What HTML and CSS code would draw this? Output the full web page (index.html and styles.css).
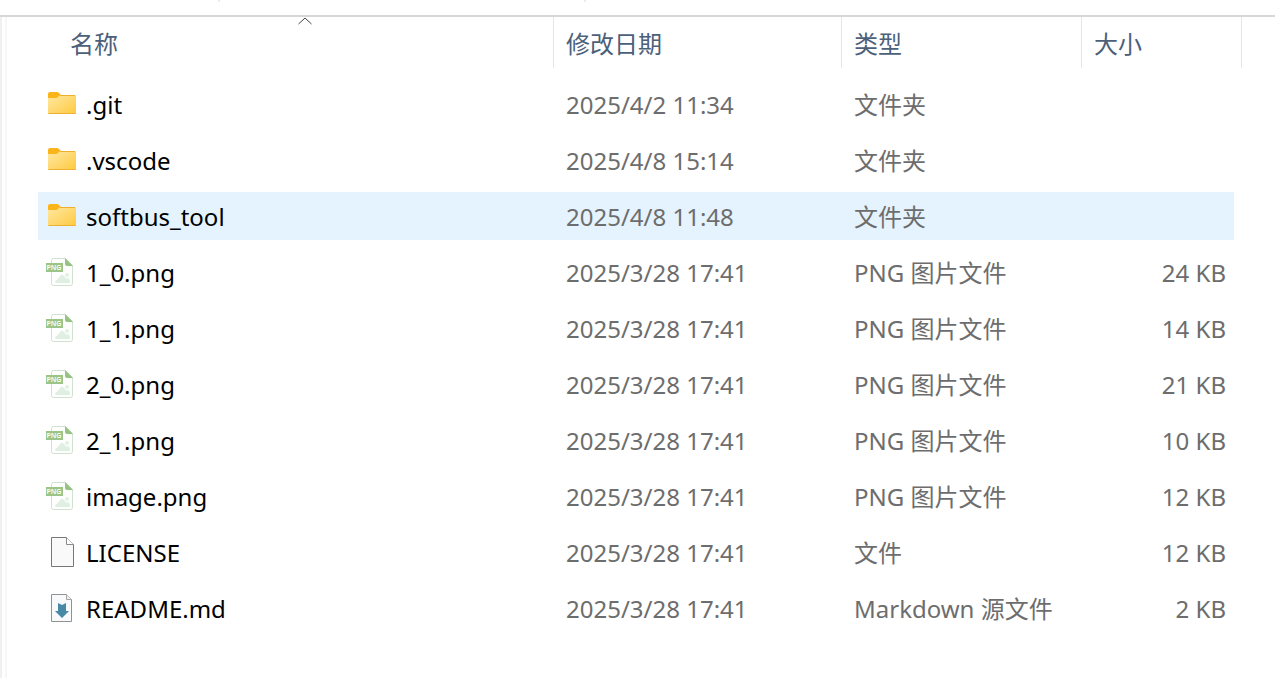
FILE: index.html
```html
<!DOCTYPE html>
<html lang="zh-CN">
<head>
    <meta charset="UTF-8">
    <meta name="viewport" content="width=device-width, initial-scale=1.0">
    <title>文件</title>
    <link rel="stylesheet" href="styles.css">
</head>
<body>
    <!-- Icon shapes shared by the rows -->
    <svg class="sprite" aria-hidden="true">
        <defs>
            <linearGradient id="folder-fill" x1="0" y1="0" x2="1" y2="1">
                <stop offset="0" stop-color="#ffe9a4"/>
                <stop offset="1" stop-color="#fec93f"/>
            </linearGradient>
            <symbol id="icon-folder" viewBox="0 0 32 32">
                <path d="M2 6q0-2 2-2h7q1 0 2 1l2 2-3 4H2z" fill="#fbb41b"/>
                <path d="M2 10h8q1 0 2-1l2-2h15q1 0 1 1v17q0 1-1 1H3q-1 0-1-1z" fill="url(#folder-fill)"/>
                <path d="M14 7.500h15M2.500 25.500h27" stroke="#efb02f" fill="none"/>
            </symbol>
            <symbol id="icon-png" viewBox="0 0 32 32">
                <path d="M7.500 2.500h12l7 7v18q0 2-2 2h-17q-2 0-2-2v-23q0-2 2-2z" fill="#fdfefd" stroke="#cfe2cb"/>
                <path d="M19 2l8 8h-6q-2 0-2-2z" fill="#97c484"/>
                <path d="M9 27q0-3 3-4l2-3q2-2 4 0l2 3 1-1q3 0 3 5z" fill="#dfefe2"/>
                <circle cx="21" cy="19" r="2" fill="#e3f1e5"/>
                <path d="M0 7h17v9H0z" fill="#9bc487"/>
                <text class="icon-label" x="8" y="14" text-anchor="middle">PNG</text>
            </symbol>
            <symbol id="icon-file" viewBox="0 0 32 32">
                <path d="M5.500 1.500h15l7 7v22h-22z" fill="#f9f9f9" stroke="#777"/>
                <path d="M20.500 1.500v7h7" fill="#fff" stroke="#8a8a8a"/>
            </symbol>
            <symbol id="icon-markdown" viewBox="0 0 32 32">
                <path d="M5.500 2.500h15l5 5v22h-20z" fill="#f9fafb" stroke="#929292"/>
                <path d="M20.500 2.500v5h5" fill="#eee" stroke="#a6a6a6"/>
                <path d="M12 11l4 2 4-2v8h3l-7 7-7-7h3z" fill="#4789a7"/>
            </symbol>
        </defs>
    </svg>

    <div class="toolbar">
        <span class="toolbar-divider"></span>
        <span class="toolbar-divider"></span>
    </div>

    <main class="explorer">
        <table class="file-list">
            <colgroup>
                <col>
                <col class="col-date">
                <col class="col-type">
                <col class="col-size">
            </colgroup>
            <thead>
                <tr>
                    <th class="name" aria-sort="ascending">
                        <button type="button">名称</button>
                        <svg class="sort-arrow" viewBox="0 0 14 8" aria-hidden="true"><path d="M.500 7L7 1l6.500 6"/></svg>
                    </th>
                    <th><button type="button">修改日期</button></th>
                    <th><button type="button">类型</button></th>
                    <th><button type="button">大小</button></th>
                </tr>
            </thead>
            <tbody>
                <tr>
                    <td class="name"><a href="#"><svg class="icon"><use href="#icon-folder"/></svg>.git</a></td>
                    <td>2025/4/2 11:34</td>
                    <td>文件夹</td>
                    <td class="size"></td>
                </tr>
                <tr>
                    <td class="name"><a href="#"><svg class="icon"><use href="#icon-folder"/></svg>.vscode</a></td>
                    <td>2025/4/8 15:14</td>
                    <td>文件夹</td>
                    <td class="size"></td>
                </tr>
                <tr class="active">
                    <td class="name"><a href="#"><svg class="icon"><use href="#icon-folder"/></svg>softbus_tool</a></td>
                    <td>2025/4/8 11:48</td>
                    <td>文件夹</td>
                    <td class="size"></td>
                </tr>
                <tr>
                    <td class="name"><a href="#"><svg class="icon"><use href="#icon-png"/></svg>1_0.png</a></td>
                    <td>2025/3/28 17:41</td>
                    <td>PNG 图片文件</td>
                    <td class="size">24 KB</td>
                </tr>
                <tr>
                    <td class="name"><a href="#"><svg class="icon"><use href="#icon-png"/></svg>1_1.png</a></td>
                    <td>2025/3/28 17:41</td>
                    <td>PNG 图片文件</td>
                    <td class="size">14 KB</td>
                </tr>
                <tr>
                    <td class="name"><a href="#"><svg class="icon"><use href="#icon-png"/></svg>2_0.png</a></td>
                    <td>2025/3/28 17:41</td>
                    <td>PNG 图片文件</td>
                    <td class="size">21 KB</td>
                </tr>
                <tr>
                    <td class="name"><a href="#"><svg class="icon"><use href="#icon-png"/></svg>2_1.png</a></td>
                    <td>2025/3/28 17:41</td>
                    <td>PNG 图片文件</td>
                    <td class="size">10 KB</td>
                </tr>
                <tr>
                    <td class="name"><a href="#"><svg class="icon"><use href="#icon-png"/></svg>image.png</a></td>
                    <td>2025/3/28 17:41</td>
                    <td>PNG 图片文件</td>
                    <td class="size">12 KB</td>
                </tr>
                <tr>
                    <td class="name"><a href="#"><svg class="icon"><use href="#icon-file"/></svg>LICENSE</a></td>
                    <td>2025/3/28 17:41</td>
                    <td>文件</td>
                    <td class="size">12 KB</td>
                </tr>
                <tr>
                    <td class="name"><a href="#"><svg class="icon"><use href="#icon-markdown"/></svg>README.md</a></td>
                    <td>2025/3/28 17:41</td>
                    <td>Markdown 源文件</td>
                    <td class="size">2 KB</td>
                </tr>
            </tbody>
        </table>
    </main>
</body>
</html>
```
FILE: styles.css
```css
* {
    margin: 0;
    padding: 0;
    box-sizing: border-box;
}

body {
    min-height: 100vh;
    display: flex;
    flex-direction: column;
    font-family: 'Noto Sans', 'Noto Sans CJK SC', sans-serif;
    font-size: 24px;
    line-height: 32px;
    color: #6d6d6d;
    background: #fff;
}

.sprite {
    position: absolute;
    width: 0;
    height: 0;
}

.toolbar {
    display: flex;
    gap: 364px;
    height: 17px;
    padding-left: 218px;
    border-bottom: 2px solid #d6d8d6;
}

.toolbar-divider {
    width: 2px;
    height: 2px;
    background: #ececec;
}

/* Pane edge and splitter on the left */
.explorer {
    flex: 1;
    padding: 0 33px 0 38px;
    background: linear-gradient(90deg, #f0f0f0 2px, #fff 2px, #fff 5px, #f7f7f7 5px, #f7f7f7 7px, #fff 7px);
}

.file-list {
    width: 100%;
    table-layout: fixed;
    border-collapse: separate;
    border-spacing: 0;
}

.col-date {
    width: 288px;
}

.col-type {
    width: 240px;
}

.col-size {
    width: 160px;
}

th {
    position: relative;
    height: 59px;
    vertical-align: top;
    text-align: left;
}

th button {
    display: block;
    width: 100%;
    height: 51px;
    padding: 2px 12px 0;
    border: none;
    border-right: 1px solid #e5e5e5;
    background: none;
    font: inherit;
    font-weight: 400;
    color: #4c607a;
    text-align: left;
    cursor: pointer;
}

th.name button {
    padding-left: 32px;
}

.sort-arrow {
    position: absolute;
    top: 0;
    left: calc(50% + 2px);
    width: 14px;
    height: 8px;
    fill: none;
    stroke: #444;
}

/* Transparent borders leave a gap between highlighted rows */
td {
    height: 56px;
    padding: 2px 12px 0;
    border: solid transparent;
    border-width: 4px 0;
    background-clip: padding-box;
    white-space: nowrap;
}

td.name {
    padding-left: 8px;
    border-radius: 2px 0 0 2px;
}

td.size {
    padding-right: 8px;
    border-right-width: 8px;
    text-align: right;
}

td a {
    display: flex;
    align-items: center;
    gap: 8px;
    color: #000;
    text-decoration: none;
}

.icon {
    width: 32px;
    height: 32px;
    margin-bottom: 2px;
}

.icon-label {
    font-family: 'Noto Sans', sans-serif;
    font-size: 7px;
    font-weight: 600;
    fill: #fff;
}

tr.active td,
tbody tr:hover td {
    background-color: #e5f3ff;
}
```
